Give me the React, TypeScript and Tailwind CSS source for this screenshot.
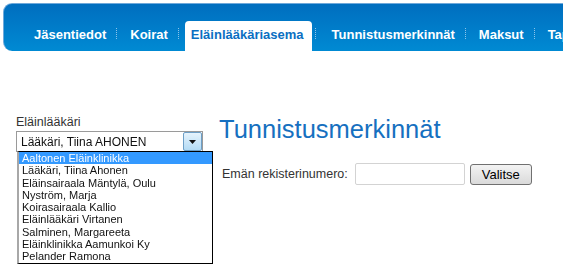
import React from "react";

const tabs = ["Jäsentiedot", "Koirat", "Eläinlääkäriasema", "Tunnistusmerkinnät", "Maksut", "Tapahtumat"];
const vets = [
  "Aaltonen Eläinklinikka",
  "Lääkäri, Tiina Ahonen",
  "Eläinsairaala Mäntylä, Oulu",
  "Nyström, Marja",
  "Koirasairaala Kallio",
  "Eläinlääkäri Virtanen",
  "Salminen, Margareeta",
  "Eläinklinikka Aamunkoi Ky",
  "Pelander Ramona",
];

export default function App() {
  return (
    <div className="relative w-[563px] h-[278px] overflow-hidden bg-white" style={{ fontFamily: '"Liberation Sans", Arial, sans-serif' }}>
      <div className="pt-[3px] pl-[3px]">
        <div className="w-[600px] h-[48px] rounded-l-[9px] border-t border-l border-[#6ea9db] bg-gradient-to-b from-[#006ebf] to-[#008ad3] flex items-end pl-[23px] whitespace-nowrap">
          {tabs.map((t, i) => (
            <React.Fragment key={t}>
              {i > 0 && <div className="ml-[3px] mr-[6px] mb-[12px] h-[11px] border-l border-dotted border-[#8cc4ea]" />}
              <div
                className={
                  "h-[30px] pt-[6px] text-[13px] font-bold leading-[15px] rounded-t-[4px] " +
                  (t === "Eläinlääkäriasema" ? "bg-white text-[#0a6fc2] pl-[6px] pr-[8px]" : "text-white px-[7px]") +
                  (t === "Tunnistusmerkinnät" ? " ml-[3px]" : "")
                }
              >
                {t}
              </div>
            </React.Fragment>
          ))}
        </div>
      </div>

      <div className="flex pl-[16px] pt-[64px] gap-[16px]">
        <div className="w-[187px] shrink-0">
          <div className="text-[12.5px] leading-[14px] text-[#333]">Eläinlääkäri</div>
          <div className="mt-[2px] h-[21px] border border-[#9a9a9a] flex items-center bg-white">
            <div className="flex-1 pl-[4px] text-[12px] text-[#111] blur-[0.6px] overflow-hidden whitespace-nowrap">Lääkäri, Tiina AHONEN</div>
            <div className="w-[19px] h-[19px] border border-[#6d9fc7] rounded-[2px] bg-gradient-to-b from-[#e6f3fc] to-[#b3dbf5] flex items-center justify-center">
              <svg width="7" height="4" viewBox="0 0 7 4"><path d="M0 0h7L3.5 4z" fill="#111" /></svg>
            </div>
          </div>
        </div>
        <div>
          <h1 className="text-[25.5px] leading-[28px] text-[#1670c0] font-normal">Tunnistusmerkinnät</h1>
          <div className="mt-[20px] flex items-center pl-[3px] text-[12.5px] text-[#333]">
            <span>Emän rekisterinumero:</span>
            <div className="ml-[7px] w-[110px] h-[22px] border border-[#d3d3d3] rounded-[2px] bg-white" />
            <button className="ml-[5px] w-[62px] h-[21px] border border-[#707070] rounded-[3px] bg-gradient-to-b from-[#f3f3f3] to-[#dadada] text-[13px] text-black leading-[15px]">
              Valitse
            </button>
          </div>
        </div>
      </div>

      <div className="absolute left-[17px] top-[151px] w-[196px] h-[113px] border border-black border-l-[2px] border-l-[#a8a8a8] bg-white overflow-hidden">
        {vets.map((v, i) => (
          <div
            key={v}
            className={
              "h-[12.3px] pl-[3px] text-[11px] leading-[12px] whitespace-nowrap overflow-hidden " +
              (i === 0 ? "bg-[#3399ff] text-white" : "text-[#111]")
            }
          >
            <span className="blur-[0.7px] inline-block">{v}</span>
          </div>
        ))}
      </div>
    </div>
  );
}
